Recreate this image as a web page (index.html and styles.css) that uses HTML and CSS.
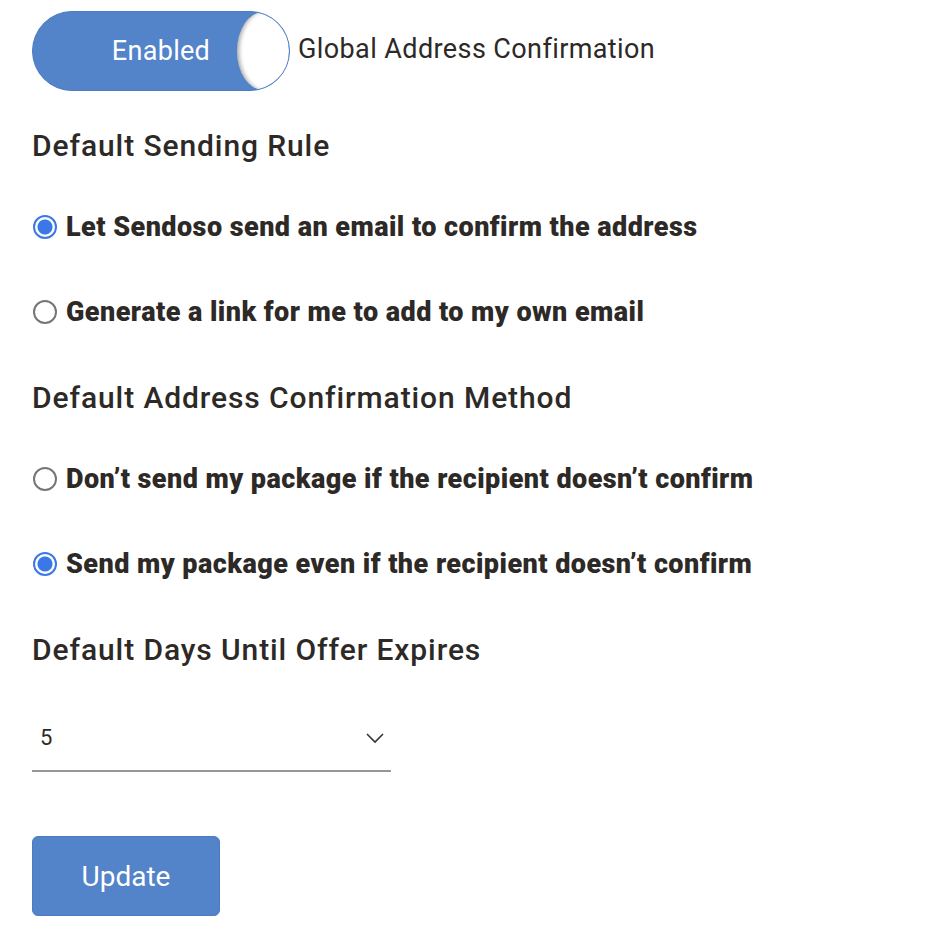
FILE: index.html
```html
<!DOCTYPE html>
<html lang="en">
  <head>
    <meta charset="UTF-8" />
    <meta name="viewport" content="width=device-width, initial-scale=1.0" />
    <title>Address Confirmation</title>
    <link rel="stylesheet" href="styles.css">
  </head>

  <body>
    <div class="settings">
      <div class="toggle-row">
        <div class="toggle on">
          <span class="toggle-label">Enabled</span>
          <span class="toggle-knob"></span>
        </div>
        <span class="toggle-title">Global Address Confirmation</span>
      </div>

      <h2>Default Sending Rule</h2>
      <label class="radio"><span class="dot checked"></span>Let Sendoso send an email to confirm the address</label>
      <label class="radio"><span class="dot"></span>Generate a link for me to add to my own email</label>

      <h2>Default Address Confirmation Method</h2>
      <label class="radio"><span class="dot"></span>Don’t send my package if the recipient doesn’t confirm</label>
      <label class="radio"><span class="dot checked"></span>Send my package even if the recipient doesn’t confirm</label>

      <h2>Default Days Until Offer Expires</h2>
      <div class="select">
        <span>5</span>
        <svg width="20" height="12" viewBox="0 0 20 12"><path d="M2 2 L10 10 L18 2" fill="none" stroke="#333" stroke-width="1.6"/></svg>
      </div>

      <button class="update">Update</button>
    </div>
  </body>
</html>
```

FILE: styles.css
```css
body {
  font-family: Roboto, "Liberation Sans", sans-serif;
  background-color: #ffffff;
  color: #2d2926;
  margin: 0;
}

.settings {
  display: flex;
  flex-direction: column;
  align-items: flex-start;
  padding: 11px 32px;
}

.toggle-row {
  display: flex;
  align-items: center;
  gap: 8px;
}

.toggle {
  position: relative;
  width: 256px;
  height: 78px;
  border: 1px solid #4a7bc4;
  border-radius: 40px;
  background-color: #5383c8;
  display: flex;
  align-items: center;
  overflow: hidden;
}

.toggle-label {
  width: 100%;
  text-align: center;
  color: #ffffff;
  font-size: 27px;
  letter-spacing: 0.3px;
}

.toggle-knob {
  position: absolute;
  top: 0;
  right: 0;
  width: 52px;
  height: 78px;
  border-radius: 50%;
  background-color: #ffffff;
  box-shadow: inset 4px 0 4px -2px rgba(0, 0, 0, 0.35);
}

.toggle-title {
  font-size: 27px;
  letter-spacing: 0.4px;
  margin-top: -4px;
}

h2 {
  font-size: 30px;
  font-weight: 500;
  letter-spacing: 0.9px;
  margin: 38px 0 0;
  line-height: 33px;
}

.radio {
  display: flex;
  align-items: center;
  gap: 9px;
  font-size: 27px;
  font-weight: 900;
  letter-spacing: 0.45px;
  line-height: 30px;
}

h2 + .radio {
  margin-top: 50px;
}

.radio + .radio {
  margin-top: 55px;
}

.radio + h2 {
  margin-top: 54px;
}

.dot {
  width: 20px;
  height: 20px;
  border: 2px solid #767676;
  border-radius: 50%;
  margin-left: 1px;
  box-sizing: content-box;
  background-color: #fff;
}

.dot.checked {
  border-color: #3b78e7;
  background: radial-gradient(circle, #3b78e7 0 7px, #ffffff 8px);
}

.select {
  width: 359px;
  margin-top: 59px;
  display: flex;
  align-items: center;
  justify-content: space-between;
  padding: 0 6px 20px 8px;
  box-sizing: border-box;
  border-bottom: 2px solid #999594;
  font-size: 22px;
}

.update {
  margin-top: 64px;
  width: 188px;
  height: 80px;
  border: 1px solid #4a7bc4;
  border-radius: 6px;
  background-color: #5383c8;
  color: #ffffff;
  font-family: Roboto, "Liberation Sans", sans-serif;
  font-size: 28px;
}
```
